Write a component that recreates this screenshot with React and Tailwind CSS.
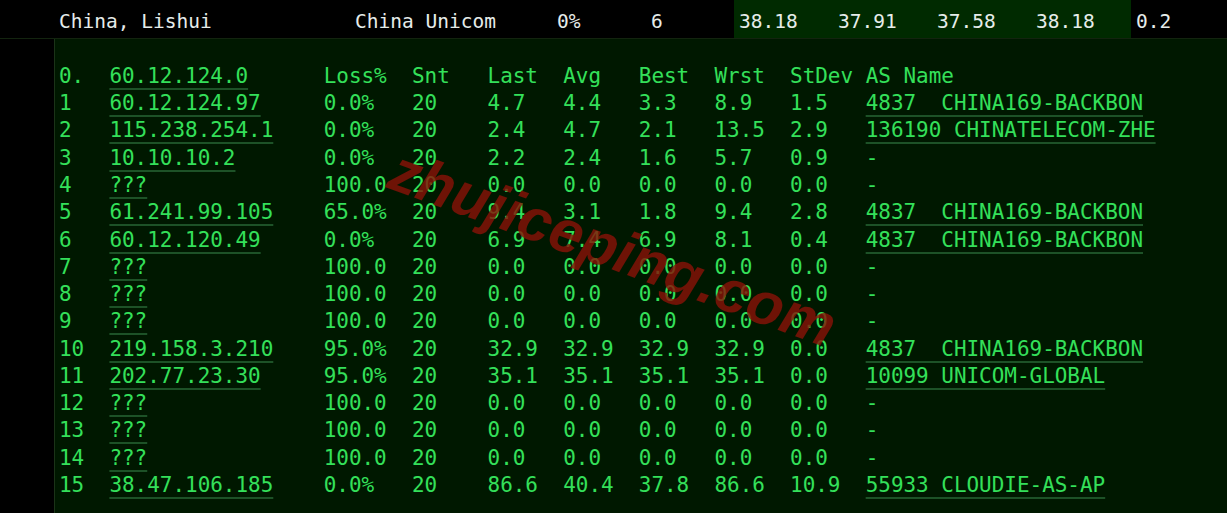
const hops = [
    { n: "1", ip: "60.12.124.97", loss: "0.0%", snt: "20", last: "4.7", avg: "4.4", best: "3.3", wrst: "8.9", stdev: "1.5", as: "4837  CHINA169-BACKBON" },
    { n: "2", ip: "115.238.254.1", loss: "0.0%", snt: "20", last: "2.4", avg: "4.7", best: "2.1", wrst: "13.5", stdev: "2.9", as: "136190 CHINATELECOM-ZHE" },
    { n: "3", ip: "10.10.10.2", loss: "0.0%", snt: "20", last: "2.2", avg: "2.4", best: "1.6", wrst: "5.7", stdev: "0.9", as: "" },
    { n: "4", ip: "???", loss: "100.0", snt: "20", last: "0.0", avg: "0.0", best: "0.0", wrst: "0.0", stdev: "0.0", as: "" },
    { n: "5", ip: "61.241.99.105", loss: "65.0%", snt: "20", last: "9.4", avg: "3.1", best: "1.8", wrst: "9.4", stdev: "2.8", as: "4837  CHINA169-BACKBON" },
    { n: "6", ip: "60.12.120.49", loss: "0.0%", snt: "20", last: "6.9", avg: "7.4", best: "6.9", wrst: "8.1", stdev: "0.4", as: "4837  CHINA169-BACKBON" },
    { n: "7", ip: "???", loss: "100.0", snt: "20", last: "0.0", avg: "0.0", best: "0.0", wrst: "0.0", stdev: "0.0", as: "" },
    { n: "8", ip: "???", loss: "100.0", snt: "20", last: "0.0", avg: "0.0", best: "0.0", wrst: "0.0", stdev: "0.0", as: "" },
    { n: "9", ip: "???", loss: "100.0", snt: "20", last: "0.0", avg: "0.0", best: "0.0", wrst: "0.0", stdev: "0.0", as: "" },
    { n: "10", ip: "219.158.3.210", loss: "95.0%", snt: "20", last: "32.9", avg: "32.9", best: "32.9", wrst: "32.9", stdev: "0.0", as: "4837  CHINA169-BACKBON" },
    { n: "11", ip: "202.77.23.30", loss: "95.0%", snt: "20", last: "35.1", avg: "35.1", best: "35.1", wrst: "35.1", stdev: "0.0", as: "10099 UNICOM-GLOBAL" },
    { n: "12", ip: "???", loss: "100.0", snt: "20", last: "0.0", avg: "0.0", best: "0.0", wrst: "0.0", stdev: "0.0", as: "" },
    { n: "13", ip: "???", loss: "100.0", snt: "20", last: "0.0", avg: "0.0", best: "0.0", wrst: "0.0", stdev: "0.0", as: "" },
    { n: "14", ip: "???", loss: "100.0", snt: "20", last: "0.0", avg: "0.0", best: "0.0", wrst: "0.0", stdev: "0.0", as: "" },
    { n: "15", ip: "38.47.106.185", loss: "0.0%", snt: "20", last: "86.6", avg: "40.4", best: "37.8", wrst: "86.6", stdev: "10.9", as: "55933 CLOUDIE-AS-AP" },
];

const link = "underline decoration-[#1d5227] decoration-2 underline-offset-[5px]";

const Row = ({ n, ip, loss, snt, last, avg, best, wrst, stdev, as }) => (
    <div className="flex h-[27.27px] items-center whitespace-pre">
        <div className="w-[4ch]">{n}</div>
        <div className="w-[17ch]"><span className={link}>{ip}</span></div>
        <div className="w-[7ch]">{loss}</div>
        <div className="w-[6ch]">{snt}</div>
        <div className="w-[6ch]">{last}</div>
        <div className="w-[6ch]">{avg}</div>
        <div className="w-[6ch]">{best}</div>
        <div className="w-[6ch]">{wrst}</div>
        <div className="w-[6ch]">{stdev}</div>
        <div>{as ? <span className={link}>{as}</span> : "-"}</div>
    </div>
);

export default function App() {
    return (
        <div className="relative h-[513px] w-full overflow-hidden bg-black font-['DejaVu_Sans_Mono',monospace]">
            {/* top result row */}
            <div className="flex h-[39px] border-b border-[#13240f] text-[19.5px] text-[#e6ecea]">
                <div className="flex w-[355px] items-center pl-[59px] pt-[6px]">China, Lishui</div>
                <div className="flex w-[202px] items-center pt-[6px]">China Unicom</div>
                <div className="flex w-[94px] items-center pt-[6px]">0%</div>
                <div className="flex w-[83px] items-center pt-[6px]">6</div>
                <div className="flex bg-[#002a00]">
                    <div className="flex w-[99px] items-center pl-[5px] pt-[6px]">38.18</div>
                    <div className="flex w-[99px] items-center pl-[5px] pt-[6px]">37.91</div>
                    <div className="flex w-[99px] items-center pl-[5px] pt-[6px]">37.58</div>
                    <div className="flex w-[100px] items-center pl-[5px] pt-[6px]">38.18</div>
                </div>
                <div className="flex items-center pl-[5px] pt-[6px]">0.2</div>
            </div>

            {/* mtr panel */}
            <div className="ml-[54px] h-[474px] border-l border-[#1b3318] bg-[#001800] pl-[4px] pt-[24px] text-[20.95px] text-[#34e05a]">
                <div className="flex h-[27.27px] items-center whitespace-pre">
                    <div className="w-[4ch]">0.</div>
                    <div className="w-[17ch]"><span className={link}>60.12.124.0</span></div>
                    <div className="w-[7ch]">Loss%</div>
                    <div className="w-[6ch]">Snt</div>
                    <div className="w-[6ch]">Last</div>
                    <div className="w-[6ch]">Avg</div>
                    <div className="w-[6ch]">Best</div>
                    <div className="w-[6ch]">Wrst</div>
                    <div className="w-[6ch]">StDev</div>
                    <div>AS Name</div>
                </div>
                {hops.map((h) => <Row key={h.n} {...h} />)}
            </div>

            {/* watermark */}
            <div className="pointer-events-none absolute left-[402px] top-[140px] origin-top-left rotate-[20deg] font-['Liberation_Sans',sans-serif] text-[60px] font-bold italic leading-none text-[#8a1208] opacity-80">
                zhujiceping.com
            </div>
        </div>
    );
}
